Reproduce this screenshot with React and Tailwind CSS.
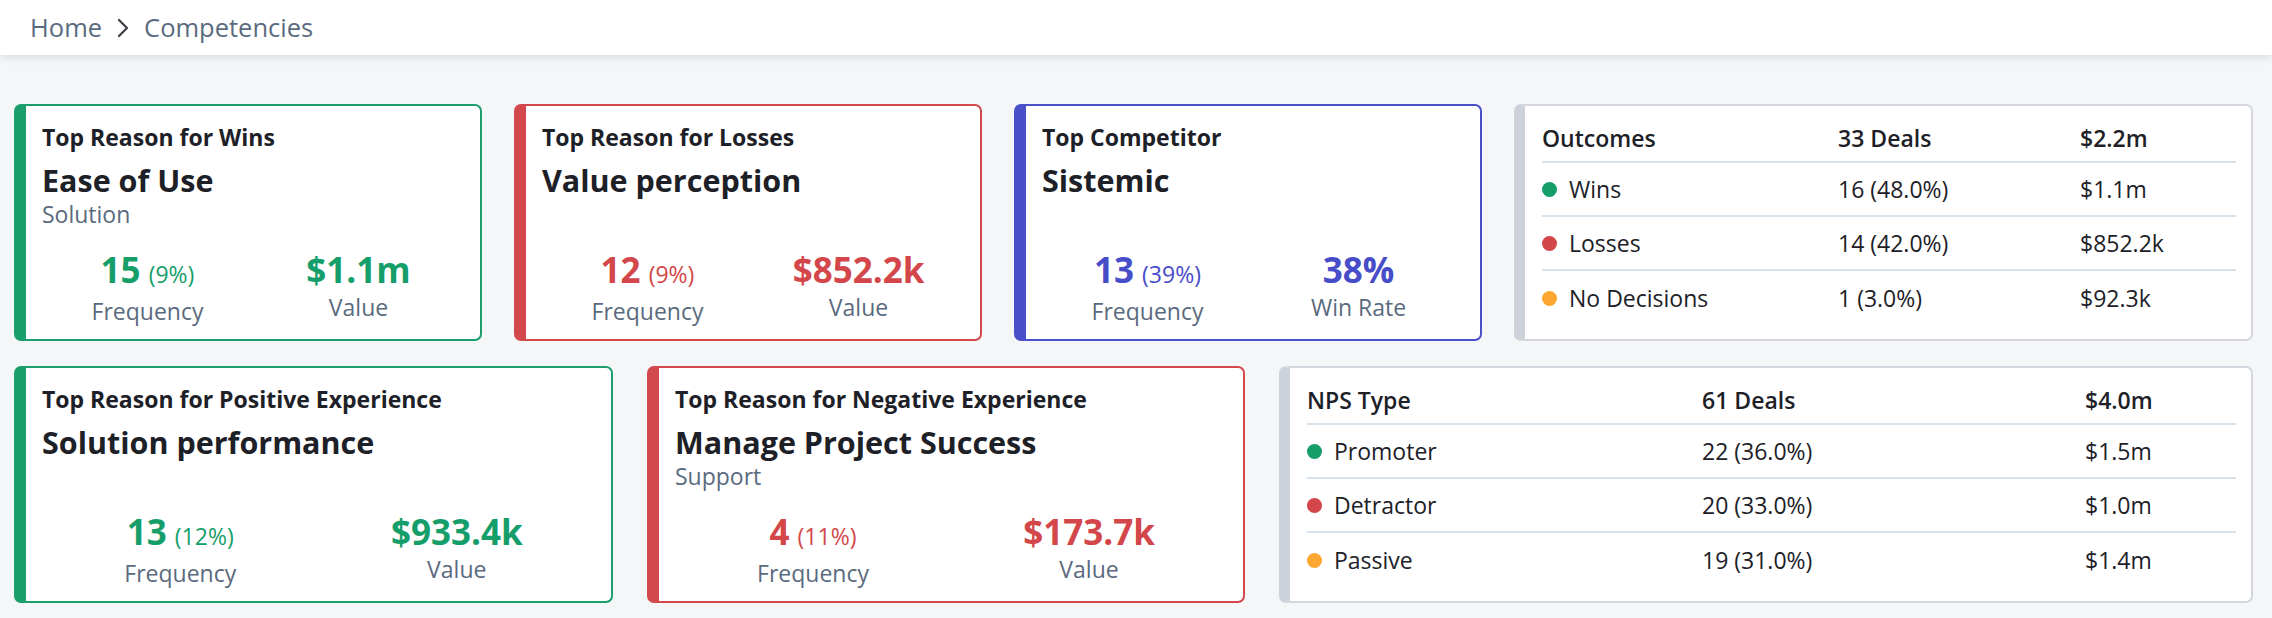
const tones = {
  green: { border: 'border-[#1a9f6c]', text: 'text-[#169e6a]' },
  red: { border: 'border-[#d3484c]', text: 'text-[#d3474b]' },
  blue: { border: 'border-[#4a4fca]', text: 'text-[#474cc8]' },
};

const ReasonCard = ({ tone, label, title, sub, count, pct, value, valueLabel, className }) => {
  const t = tones[tone];
  return (
    <div className={`flex flex-col bg-white border-2 border-l-[12px] rounded-[7px] pl-[16px] pr-[16px] pt-[17px] pb-[14px] ${t.border} ${className}`}>
      <div className="text-[23px] leading-[28px] font-bold text-[#1d2127]">{label}</div>
      <div className="mt-[11px] text-[30.5px] leading-[36px] font-bold text-[#1d2127]">{title}</div>
      {sub && <div className="mt-[2px] text-[23px] leading-[28px] text-[#5a6a7e]">{sub}</div>}
      <div className="mt-auto grid grid-cols-2">
        <div className="flex flex-col items-center">
          <div className={`flex items-baseline leading-[40px] ${t.text}`}>
            <span className="text-[35px] font-bold">{count}</span>
            <span className="ml-[8px] text-[23px]">({pct})</span>
          </div>
          <div className="mt-[3px] text-[23px] leading-[28px] text-[#5a6a7e]">Frequency</div>
        </div>
        <div className="flex flex-col items-center">
          <div className={`text-[35px] leading-[40px] font-bold ${t.text}`}>{value}</div>
          <div className="mt-[3px] text-[23px] leading-[28px] text-[#5a6a7e]">{valueLabel}</div>
        </div>
      </div>
    </div>
  );
};

const dotColors = {
  green: 'bg-[#169e6a]',
  red: 'bg-[#d3474b]',
  orange: 'bg-[#fca72f]',
};

const SummaryTable = ({ head, rows, cols }) => (
  <div className="flex-1 bg-white border-2 border-[#d3d6dc] border-l-[11px] border-l-[#cdd1d9] rounded-[7px] pt-[3px] pl-[17px] pr-[15px] text-[23px] text-[#1d2127]">
    <div className={`grid ${cols} h-[54px] pt-[6px] items-center leading-[28px] font-semibold border-b-2 border-[#d7e1eb]`}>
      {head.map((h) => (
        <div key={h}>{h}</div>
      ))}
    </div>
    {rows.map((r, i) => (
      <div
        key={r.name}
        className={`grid ${cols} h-[54px] items-center leading-[28px] ${i < rows.length - 1 ? 'border-b-2 border-[#d7e1eb]' : ''}`}
      >
        <div className="flex items-center">
          <span className={`w-[15px] h-[15px] rounded-full mr-[12px] ${dotColors[r.color]}`}></span>
          {r.name}
        </div>
        <div>{r.count}</div>
        <div>{r.value}</div>
      </div>
    ))}
  </div>
);

export default function App() {
  return (
    <div className="min-h-screen bg-[#f5f6f8] font-['Open_Sans',sans-serif]">
      <header className="h-[55px] bg-white shadow-[0_2px_8px_rgba(0,0,0,0.12)] flex items-center pl-[30px] text-[25.5px] text-[#5b6b7f]">
        <span>Home</span>
        <svg className="mx-[14px]" width="14" height="20" viewBox="0 0 14 20" fill="none">
          <path d="M3 2l8 8-8 8" stroke="#3a3d42" strokeWidth="2.2" strokeLinecap="round" strokeLinejoin="round" />
        </svg>
        <span>Competencies</span>
      </header>

      <main className="pt-[49px] pl-[14px] pr-[19px]">
        <div className="flex gap-[32px] h-[237px]">
          <ReasonCard
            className="w-[468px]"
            tone="green"
            label="Top Reason for Wins"
            title="Ease of Use"
            sub="Solution"
            count="15"
            pct="9%"
            value="$1.1m"
            valueLabel="Value"
          />
          <ReasonCard
            className="w-[468px]"
            tone="red"
            label="Top Reason for Losses"
            title="Value perception"
            count="12"
            pct="9%"
            value="$852.2k"
            valueLabel="Value"
          />
          <ReasonCard
            className="w-[468px]"
            tone="blue"
            label="Top Competitor"
            title="Sistemic"
            count="13"
            pct="39%"
            value="38%"
            valueLabel="Win Rate"
          />
          <SummaryTable
            cols="grid-cols-[296px_242px_1fr]"
            head={['Outcomes', '33 Deals', '$2.2m']}
            rows={[
              { name: 'Wins', color: 'green', count: '16 (48.0%)', value: '$1.1m' },
              { name: 'Losses', color: 'red', count: '14 (42.0%)', value: '$852.2k' },
              { name: 'No Decisions', color: 'orange', count: '1 (3.0%)', value: '$92.3k' },
            ]}
          />
        </div>

        <div className="flex gap-[34px] h-[237px] mt-[25px]">
          <ReasonCard
            className="w-[599px]"
            tone="green"
            label="Top Reason for Positive Experience"
            title="Solution performance"
            count="13"
            pct="12%"
            value="$933.4k"
            valueLabel="Value"
          />
          <ReasonCard
            className="w-[598px]"
            tone="red"
            label="Top Reason for Negative Experience"
            title="Manage Project Success"
            sub="Support"
            count="4"
            pct="11%"
            value="$173.7k"
            valueLabel="Value"
          />
          <SummaryTable
            cols="grid-cols-[395px_383px_1fr]"
            head={['NPS Type', '61 Deals', '$4.0m']}
            rows={[
              { name: 'Promoter', color: 'green', count: '22 (36.0%)', value: '$1.5m' },
              { name: 'Detractor', color: 'red', count: '20 (33.0%)', value: '$1.0m' },
              { name: 'Passive', color: 'orange', count: '19 (31.0%)', value: '$1.4m' },
            ]}
          />
        </div>
      </main>
    </div>
  );
}
